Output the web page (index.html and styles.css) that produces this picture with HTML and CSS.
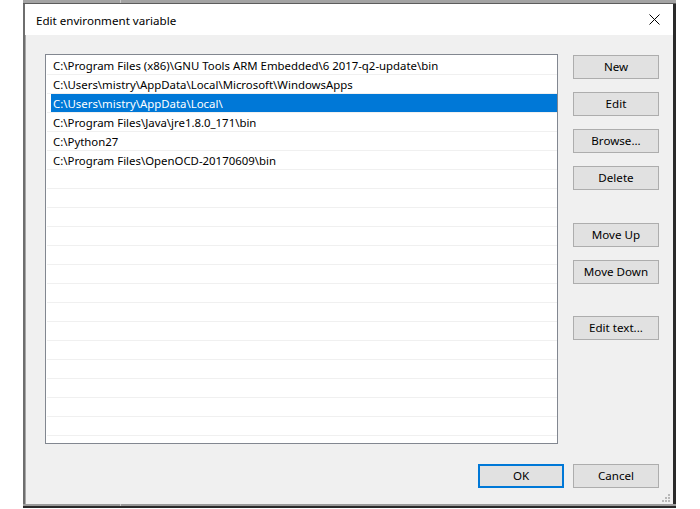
FILE: index.html
```html
<!DOCTYPE html>
<html lang="en">
<head>
<meta charset="UTF-8">
<meta name="viewport" content="width=device-width, initial-scale=1.0">
<title>Edit environment variable</title>
<link rel="stylesheet" href="styles.css">
</head>
<body>

<div class="backdrop-top"><span></span></div>

<div class="window">
    <div class="titlebar">
        <span class="title">Edit environment variable</span>
        <svg class="close" width="11" height="11" viewBox="0 0 11 11">
            <path d="M0.5 0.5 L10.5 10.5 M10.5 0.5 L0.5 10.5" stroke="#000" stroke-width="1" fill="none"/>
        </svg>
    </div>

    <div class="content">
        <div class="main-row">
            <ul class="path-list" id="pathList"></ul>

            <div class="side-buttons">
                <button class="btn">New</button>
                <button class="btn">Edit</button>
                <button class="btn">Browse...</button>
                <button class="btn">Delete</button>
                <button class="btn group-start">Move Up</button>
                <button class="btn">Move Down</button>
                <button class="btn group-start2">Edit text...</button>
            </div>
        </div>

        <div class="footer">
            <button class="btn btn-default">OK</button>
            <button class="btn">Cancel</button>
        </div>

        <svg class="grip" width="9" height="9" viewBox="0 0 9 9">
            <rect x="6" y="0" width="2" height="2" fill="#b8b8b8"/>
            <rect x="3" y="3" width="2" height="2" fill="#b8b8b8"/>
            <rect x="6" y="3" width="2" height="2" fill="#b8b8b8"/>
            <rect x="0" y="6" width="2" height="2" fill="#b8b8b8"/>
            <rect x="3" y="6" width="2" height="2" fill="#b8b8b8"/>
            <rect x="6" y="6" width="2" height="2" fill="#b8b8b8"/>
        </svg>
    </div>
</div>

<div class="backdrop-bottom"><span></span></div>

<script>
    const paths = [
        'C:\\Program Files (x86)\\GNU Tools ARM Embedded\\6 2017-q2-update\\bin',
        'C:\\Users\\mistry\\AppData\\Local\\Microsoft\\WindowsApps',
        'C:\\Users\\mistry\\AppData\\Local\\',
        'C:\\Program Files\\Java\\jre1.8.0_171\\bin',
        'C:\\Python27',
        'C:\\Program Files\\OpenOCD-20170609\\bin'
    ];
    const selectedIndex = 2;
    const totalRows = 21;

    const list = document.getElementById('pathList');
    for (let i = 0; i < totalRows; i++) {
        const li = document.createElement('li');
        li.textContent = paths[i] || '';
        if (i === selectedIndex) li.className = 'selected';
        list.appendChild(li);
    }
</script>

</body>
</html>
```

FILE: styles.css
```css
body {
    margin: 0;
    padding: 0;
    width: 700px;
    height: 509px;
    overflow: hidden;
    background-color: #fff;
    font-family: 'Noto Sans', sans-serif;
    font-size: 11.4px;
    color: #000;
}
.backdrop-top {
    margin-left: 23px;
    width: 653px;
    height: 3px;
    background-color: #a3a3a3;
    border-bottom: 1px solid #5c5c5c;
    position: relative;
}
.backdrop-top span,
.backdrop-bottom span {
    position: absolute;
    left: 97px;
    top: 0;
    width: 1px;
    height: 100%;
    background-color: #c8c8c8;
}
.window {
    margin-left: 23px;
    width: 648px;
    height: 500px;
    border-left: 2px solid #6e6e6e;
    border-right: 3px solid #2a2a2a;
    box-shadow: inset 1px 0 0 #a8a8a8;
    display: flex;
    flex-direction: column;
}
.titlebar {
    height: 31px;
    flex-shrink: 0;
    background-color: #fff;
    display: flex;
    align-items: center;
    padding: 0 13px 0 11px;
}
.title {
    flex: 1;
    font-size: 11.6px;
    padding-top: 1px;
}
.close {
    margin-bottom: 1px;
}
.content {
    flex: 1;
    background-color: #f0f0f0;
    padding: 19px 14px 0 19px;
    position: relative;
    margin-left: 1px;
}
.main-row {
    display: flex;
    gap: 15px;
}
.path-list {
    list-style-type: none;
    margin: 0;
    padding: 1px 0 0 0;
    width: 511px;
    height: 387px;
    flex-shrink: 0;
    border: 1px solid #828790;
    background-color: #fff;
    overflow: hidden;
}
.path-list li {
    height: 19px;
    box-sizing: border-box;
    margin-left: 1px;
    padding: 1px 0 0 6px;
    line-height: 17px;
    border-bottom: 1px solid #f0f0f0;
    white-space: nowrap;
}
.path-list li.selected {
    background: linear-gradient(to right, transparent 4px, #0078d7 4px);
    color: #fff;
}
.side-buttons {
    display: flex;
    flex-direction: column;
    padding-top: 1px;
    gap: 13px;
}
.btn {
    width: 86px;
    height: 24px;
    padding: 0 0 1px 0;
    font-family: 'Noto Sans', sans-serif;
    font-size: 11.6px;
    color: #000;
    background-color: #e1e1e1;
    border: 1px solid #adadad;
    border-radius: 0;
}
.group-start {
    margin-top: 20px;
}
.group-start2 {
    margin-top: 19px;
}
.footer {
    display: flex;
    justify-content: flex-end;
    gap: 9px;
    margin-top: 20px;
}
.btn-default {
    border: 2px solid #0078d7;
}
.grip {
    position: absolute;
    right: 2px;
    bottom: 1px;
}
.backdrop-bottom {
    margin-left: 23px;
    width: 653px;
    height: 2px;
    background-color: #9a9a9a;
    border-bottom: 2px solid #2a2a2a;
    position: relative;
}
```
